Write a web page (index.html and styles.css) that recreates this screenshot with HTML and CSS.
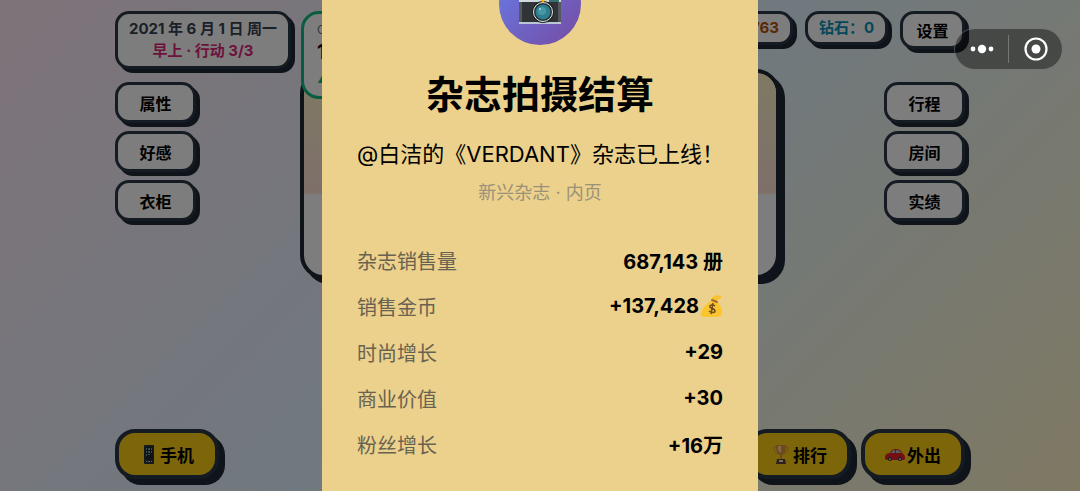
FILE: index.html
```html
<!DOCTYPE html>
<html lang="zh-CN">

<head>
    <meta charset="UTF-8">
    <meta name="viewport" content="width=device-width, initial-scale=1.0">
    <title>杂志拍摄结算</title>
    <link rel="stylesheet" href="styles.css">
</head>

<body>
    <div class="game">
        <header class="top-bar">
            <div class="date-box">
                <div class="date">2021 年 6 月 1 日 周一</div>
                <div class="period">早上 · 行动 3/3</div>
            </div>
            <div class="top-right">
                <div class="stat coins">金币：9763</div>
                <div class="stat gems">钻石：0</div>
                <button class="settings-btn">设置</button>
            </div>
        </header>

        <main class="stage">
            <nav class="side-menu">
                <button class="menu-btn">属性</button>
                <button class="menu-btn">好感</button>
                <button class="menu-btn">衣柜</button>
            </nav>
            <section class="scene">
                <div class="scene-image"></div>
                <div class="toast">
                    <div class="toast-label">C</div>
                    <div class="toast-value">1</div>
                    <div class="toast-change">▲</div>
                </div>
            </section>
            <nav class="side-menu">
                <button class="menu-btn">行程</button>
                <button class="menu-btn">房间</button>
                <button class="menu-btn">实绩</button>
            </nav>
        </main>

        <footer class="bottom-bar">
            <button class="action-btn">
                <svg width="18" height="20" viewBox="0 0 18 20">
                    <rect x="4" y="1" width="10" height="19" rx="1" fill="#263238" />
                    <rect x="5" y="3" width="8" height="12" fill="#1c262b" />
                    <path d="M6 4h1v2H6zM8 4h2v2H8zM11 4h1v2h-1zM6 7h1v2H6zM8 7h2v2H8zM11 7h1v2h-1zM6 10h1v2H6zM8 10h2v1H8z" fill="#78909c" />
                    <path d="M6 17h1v1H6zM8 17h2v1H8zM11 17h1v1h-1z" fill="#b0bec5" />
                </svg>手机
            </button>
            <div class="bottom-right">
                <button class="action-btn">
                    <svg width="20" height="20" viewBox="0 0 20 20">
                        <path d="M5 3H3c0 4 1 6 5 7M15 3h2c0 4-1 6-5 7" fill="none" stroke="#d99a3d" stroke-width="1" />
                        <path d="M5 1h10c0 6-1 9-4 10v4H9v-4C6 10 5 7 5 1z" fill="#e0913a" />
                        <path d="M7 2h3v7C7 7 7 5 7 2z" fill="#ffd699" />
                        <path d="M6 15h8l1 5H5z" fill="#5d4037" />
                        <rect x="8" y="16" width="4" height="2" fill="#e8d9c0" />
                    </svg>排行
                </button>
                <button class="action-btn">
                    <svg width="20" height="20" viewBox="0 0 20 20">
                        <path d="M0 13c0-2 2-4 5-4 1-3 3-4 6-4s5 1 6 4c2 1 3 2 3 6l-1 1H2l-2-1z" fill="#e8202a" />
                        <path d="M6 9c1-2 2-3 4-3v3zM11 6c3 0 4 1 5 3h-5z" fill="#b0bec5" />
                        <circle cx="5" cy="15" r="2" fill="#263238" />
                        <circle cx="15" cy="15" r="2" fill="#263238" />
                        <circle cx="5" cy="15" r="1" fill="#cfd8dc" />
                        <circle cx="15" cy="15" r="1" fill="#cfd8dc" />
                    </svg>外出
                </button>
            </div>
        </footer>
    </div>

    <div class="overlay">
        <div class="modal" role="dialog" aria-labelledby="modal-title">
            <div class="modal-icon">
                <svg width="44" height="44" viewBox="0 0 44 44">
                    <path d="M1 20V10h8V7h8l3-5h12l3 6h8v12z" fill="#cfd8dc" />
                    <path d="M31 18h10v2H31z" fill="#37706c" />
                    <rect x="1" y="20" width="42" height="20" fill="#303436" />
                    <path d="M1 20h3v20H1zM40 20h3v20h-3z" fill="#54595c" />
                    <rect x="1" y="40" width="42" height="2" fill="#b9c7d6" />
                    <circle cx="25" cy="30" r="11" fill="#202425" />
                    <circle cx="25" cy="30" r="9.5" fill="#263238" stroke="#e4e7e8" stroke-width="1" />
                    <circle cx="25" cy="30" r="7.5" fill="#2d7f8d" />
                    <circle cx="24" cy="29" r="4" fill="#4798a4" />
                    <circle cx="22" cy="27" r="1" fill="#a7dbe2" />
                    <path d="M21 15h8l-4 6z" fill="#ffb300" />
                </svg>
            </div>
            <h1 class="modal-title" id="modal-title">杂志拍摄结算</h1>
            <p class="modal-message">@白洁的《VERDANT》杂志已上线！</p>
            <p class="modal-sub">新兴杂志 · 内页</p>
            <dl class="results">
                <div class="result">
                    <dt>杂志销售量</dt>
                    <dd>687,143 册</dd>
                </div>
                <div class="result">
                    <dt>销售金币</dt>
                    <dd>+137,428<svg width="24" height="24" viewBox="0 0 24 24">
                            <path d="M14 6c-5 2-12 9-12 14 0 3 3 3 10 3s11 0 11-4c0-5-3-10-6-13z" fill="#fdc52c" />
                            <path d="M14 6c-2-2-1-4 1-3 1-2 3-3 4-1 2-2 4 0 3 2-1 1-3 1-5 3z" fill="#fbc02d" />
                            <path d="M13 6l5 2" stroke="#a66b2b" stroke-width="2" stroke-linecap="round" />
                            <path d="M16 12c-2-2-6-1-5 1 0 2 5 1 5 4 0 2-4 2-6 0M14 9l-2 11" fill="none" stroke="#6d4c26" stroke-width="1.5" />
                        </svg></dd>
                </div>
                <div class="result">
                    <dt>时尚增长</dt>
                    <dd>+29</dd>
                </div>
                <div class="result">
                    <dt>商业价值</dt>
                    <dd>+30</dd>
                </div>
                <div class="result">
                    <dt>粉丝增长</dt>
                    <dd>+16万</dd>
                </div>
            </dl>
        </div>
    </div>

    <div class="capsule">
        <button class="capsule-btn" aria-label="更多">
            <svg width="24" height="24" viewBox="0 0 24 24" fill="#fff">
                <circle cx="3" cy="12" r="2.4" />
                <circle cx="12" cy="12" r="4.2" />
                <circle cx="21" cy="12" r="2.4" />
            </svg>
        </button>
        <button class="capsule-btn" aria-label="关闭">
            <svg width="24" height="24" viewBox="0 0 24 24">
                <circle cx="12" cy="12" r="10.5" fill="none" stroke="#fff" stroke-width="2.2" />
                <circle cx="12" cy="12" r="4.5" fill="#fff" />
            </svg>
        </button>
    </div>
</body>

</html>
```

FILE: styles.css
```css
* {
    margin: 0;
    padding: 0;
    box-sizing: border-box;
}

body {
    min-height: 100vh;
    overflow: hidden;
    font-family: Inter, "Noto Sans CJK SC", sans-serif;
    background: linear-gradient(135deg, #fce7f3 0%, #e0f2fe 50%, #fef3c7 100%);
}

button {
    font-family: inherit;
    font-weight: 700;
    color: #000;
    cursor: pointer;
}

.game {
    max-width: 850px;
    height: 100vh;
    margin: 0 auto;
    padding: 11px 0 12px;
    display: flex;
    flex-direction: column;
}

.top-bar {
    display: flex;
    justify-content: space-between;
    align-items: flex-start;
    height: 58px;
}

.date-box,
.stat,
.settings-btn,
.menu-btn {
    background: #fafafa;
    border: 3px solid #2a3644;
    border-radius: 14px;
    box-shadow: 4px 4px 0 #1f2937;
}

.date-box {
    padding: 4px 11px;
    font-size: 15px;
    font-weight: 700;
    line-height: 22px;
    text-align: center;
}

.date {
    color: #374151;
}

.period {
    color: #db2777;
}

.top-right {
    display: flex;
    gap: 12px;
}

.stat {
    height: 34px;
    padding: 0 11px;
    font-size: 15px;
    font-weight: 700;
    line-height: 28px;
}

.coins {
    color: #b45309;
}

.gems {
    color: #0891b2;
}

.settings-btn {
    width: 65px;
    height: 38px;
    font-size: 16px;
}

.stage {
    flex: 1;
    display: flex;
    justify-content: space-between;
    align-items: flex-start;
}

.side-menu {
    display: flex;
    flex-direction: column;
    gap: 8px;
    padding-top: 13px;
}

.menu-btn {
    width: 81px;
    height: 41px;
    font-size: 16px;
}

.scene {
    position: relative;
    width: 480px;
    height: 210px;
    background: #fafafa;
    border: 4px solid #1f2937;
    border-radius: 24px;
    box-shadow: 5px 5px 0 #1f2937;
}

.scene-image {
    height: 121px;
    border-radius: 20px 20px 0 0;
    background: linear-gradient(180deg, #fef3c7, #fce0d4);
}

.toast {
    position: absolute;
    top: -62px;
    left: -3px;
    width: 160px;
    height: 88px;
    padding: 7px 13px;
    background: #fafafa;
    border: 3px solid #10b981;
    border-radius: 18px;
}

.toast-label {
    font-size: 12px;
    line-height: 18px;
    color: #6b7280;
}

.toast-value {
    font-size: 20px;
    font-weight: 700;
    line-height: 26px;
}

.toast-change {
    font-size: 14px;
    line-height: 26px;
    color: #10b981;
}

.bottom-bar,
.bottom-right {
    display: flex;
    justify-content: space-between;
    gap: 10px;
}

.action-btn {
    display: flex;
    justify-content: center;
    align-items: center;
    gap: 2px;
    width: 104px;
    height: 50px;
    font-size: 17px;
    background: #facc15;
    border: 4px solid #2a3644;
    border-radius: 20px;
    box-shadow: 6px 6px 0 #1f2937;
}

.overlay {
    position: fixed;
    inset: 0;
    display: flex;
    justify-content: center;
    background: rgba(0, 0, 0, 0.5);
}

.modal {
    width: 436px;
    min-height: 100%;
    padding: 0 35px;
    background: #ebd18c;
    text-align: center;
}

.modal-icon {
    display: flex;
    justify-content: center;
    align-items: center;
    width: 82px;
    height: 82px;
    margin: -37px auto 0;
    border-radius: 50%;
    background: linear-gradient(135deg, #667eea, #764ba2);
}

.modal-title {
    margin-top: 23px;
    font-size: 38px;
    line-height: 52px;
}

.modal-message {
    margin-top: 18px;
    font-size: 22px;
    line-height: 32px;
    white-space: nowrap;
}

.modal-sub {
    margin-top: 10px;
    font-size: 18px;
    line-height: 26px;
    color: #9b9078;
}

.results {
    margin-top: 31px;
}

.result {
    display: flex;
    justify-content: space-between;
    align-items: center;
    height: 46px;
}

.result dt {
    font-size: 20px;
    color: #6a6250;
}

.result dd {
    display: flex;
    align-items: center;
    font-size: 20px;
    font-weight: 700;
    white-space: pre;
}

.capsule {
    position: fixed;
    top: 28px;
    right: 17px;
    display: flex;
    align-items: center;
    width: 109px;
    height: 42px;
    background: rgba(0, 0, 0, 0.4);
    border: 1px solid rgba(255, 255, 255, 0.25);
    border-radius: 21px;
}

.capsule-btn {
    flex: 1;
    display: flex;
    justify-content: center;
    align-items: center;
    height: 28px;
    background: none;
    border: none;
}

.capsule-btn + .capsule-btn {
    border-left: 1px solid rgba(255, 255, 255, 0.25);
}
```
